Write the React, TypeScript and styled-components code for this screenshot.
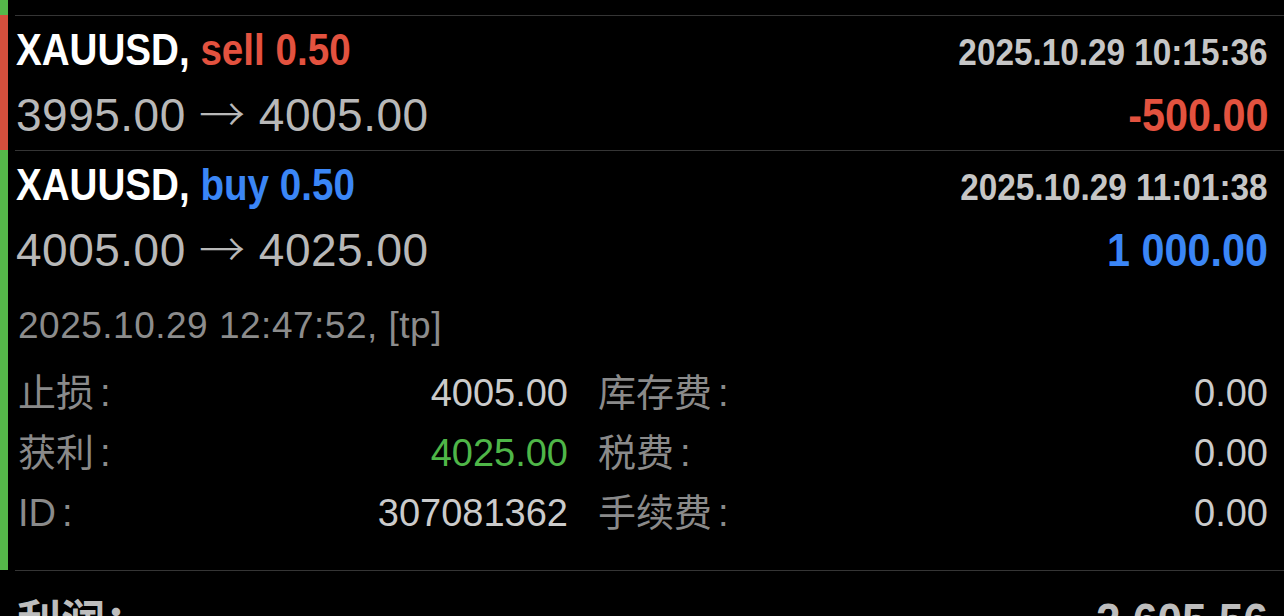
import React from "react";
import styled, { createGlobalStyle, css } from "styled-components";

type Side = "buy" | "sell";

type Deal = {
  symbol: string;
  side: Side;
  volume: string;
  open: string;
  close: string;
  time: string;
  profit: string;
  details?: {
    closedAt: string;
    fields: { label: string; value: string; tone?: "green" }[];
  };
};

const deals: Deal[] = [
  {
    symbol: "XAUUSD",
    side: "sell",
    volume: "0.50",
    open: "3995.00",
    close: "4005.00",
    time: "2025.10.29 10:15:36",
    profit: "-500.00",
  },
  {
    symbol: "XAUUSD",
    side: "buy",
    volume: "0.50",
    open: "4005.00",
    close: "4025.00",
    time: "2025.10.29 11:01:38",
    profit: "1 000.00",
    details: {
      closedAt: "2025.10.29 12:47:52, [tp]",
      fields: [
        { label: "止损", value: "4005.00" },
        { label: "库存费", value: "0.00" },
        { label: "获利", value: "4025.00", tone: "green" },
        { label: "税费", value: "0.00" },
        { label: "ID", value: "307081362" },
        { label: "手续费", value: "0.00" },
      ],
    },
  },
];

const sideColor: Record<Side, string> = { buy: "#3b86f6", sell: "#e3523f" };
const barColor: Record<Side, string> = { buy: "#55b84a", sell: "#d44f3d" };

const BOLD = `"Liberation Sans", "Noto Sans CJK SC", sans-serif`;

// the app's bold face is a condensed one; squeeze Liberation Sans Bold to match
const condensed = (amount: number, origin: "left" | "right") => css`
  display: inline-block;
  font-family: ${BOLD};
  font-weight: 700;
  transform: scaleX(${amount});
  transform-origin: ${origin} center;
`;

const GlobalStyle = createGlobalStyle`
  html, body { margin: 0; padding: 0; background: #000; }
  body {
    font-family: "Liberation Sans", "Noto Sans CJK SC", sans-serif;
    -webkit-font-smoothing: antialiased;
  }
`;

export default function App() {
  return (
    <>
      <GlobalStyle />
      <Screen>
        {/* tail of the previous deal */}
        <Item>
          <Bar $color={barColor.buy} />
          <Stub />
        </Item>
        {deals.map((d, i) => (
          <Item key={i}>
            <Bar $color={barColor[d.side]} />
            <Body $pb={d.details ? 27 : 8}>
              <Line $h={60}>
                <Title>
                  {d.symbol},{" "}
                  <SideText $side={d.side}>
                    {d.side} {d.volume}
                  </SideText>
                </Title>
                <Time>{d.time}</Time>
              </Line>
              <Line $h={62}>
                <Prices>
                  {d.open} <Arrow>→</Arrow> {d.close}
                </Prices>
                <Profit $side={d.side}>{d.profit}</Profit>
              </Line>
              {d.details && (
                <>
                  <ClosedAt>{d.details.closedAt}</ClosedAt>
                  <Details>
                    {d.details.fields.map((f) => (
                      <Field key={f.label}>
                        <Label>
                          {f.label}
                          <Colon>:</Colon>
                        </Label>
                        <Value $tone={f.tone}>{f.value}</Value>
                      </Field>
                    ))}
                  </Details>
                </>
              )}
            </Body>
          </Item>
        ))}
        <Footer>
          <TotalLabel>利润：</TotalLabel>
          <TotalValue>2 605.56</TotalValue>
        </Footer>
      </Screen>
    </>
  );
}

const Screen = styled.div`
  width: 1284px;
  height: 616px;
  overflow: hidden;
  background: #000;
`;
const Item = styled.div`
  display: flex;
`;
const Bar = styled.div<{ $color: string }>`
  width: 8px;
  flex: none;
  background: ${({ $color }) => $color};
`;
const Stub = styled.div`
  height: 15px;
`;
const Body = styled.div<{ $pb: number }>`
  flex: 1;
  margin-left: 7px;
  border-top: 1px solid #353535;
  padding: 4px 16px ${({ $pb }) => $pb}px 1px;
`;
const Line = styled.div<{ $h: number }>`
  display: flex;
  justify-content: space-between;
  align-items: baseline;
  height: ${({ $h }) => $h}px;
  line-height: ${({ $h }) => $h}px;
  white-space: nowrap;
`;
const Title = styled.span`
  ${condensed(0.877, "left")}
  font-size: 44px;
  color: #fff;
`;
const SideText = styled.span<{ $side: Side }>`
  color: ${({ $side }) => sideColor[$side]};
`;
const Time = styled.span`
  ${condensed(0.9, "right")}
  font-size: 37px;
  color: #c6c6c6;
`;
const Prices = styled.span`
  font-size: 46px;
  letter-spacing: 0.5px;
  color: #b8b8b8;
`;
const Arrow = styled.span`
  font-family: "Noto Sans CJK SC", sans-serif;
  font-weight: 300;
`;
const Profit = styled.span<{ $side: Side }>`
  ${condensed(0.88, "right")}
  font-size: 47px;
  color: ${({ $side }) => sideColor[$side]};
`;
const ClosedAt = styled.div`
  margin-top: 19px;
  padding-left: 2px;
  height: 60px;
  line-height: 60px;
  font-size: 37px;
  letter-spacing: 0.5px;
  color: #8c8c8c;
  white-space: nowrap;
`;
const Details = styled.div`
  display: grid;
  grid-template-columns: 550px 1fr;
  column-gap: 30px;
  margin-top: 7px;
  padding-left: 2px;
`;
const Field = styled.div`
  display: flex;
  justify-content: space-between;
  align-items: baseline;
  height: 60px;
  line-height: 60px;
  font-size: 38px;
  white-space: nowrap;
`;
const Label = styled.span`
  color: #8a8a8a;
`;
const Colon = styled.span`
  margin-left: 6px;
`;
const Value = styled.span<{ $tone?: "green" }>`
  color: ${({ $tone }) => ($tone === "green" ? "#4fb648" : "#cbcbcb")};
`;
const Footer = styled.div`
  display: flex;
  justify-content: space-between;
  align-items: baseline;
  margin-left: 15px;
  border-top: 1px solid #353535;
  padding: 19px 16px 0 2px;
  height: 60px;
  line-height: 60px;
  color: #bdbdbd;
  white-space: nowrap;
`;
const TotalLabel = styled.span`
  font-family: ${BOLD};
  font-weight: 700;
  font-size: 44px;
`;
const TotalValue = styled.span`
  ${condensed(0.9, "right")}
  font-size: 49px;
`;
